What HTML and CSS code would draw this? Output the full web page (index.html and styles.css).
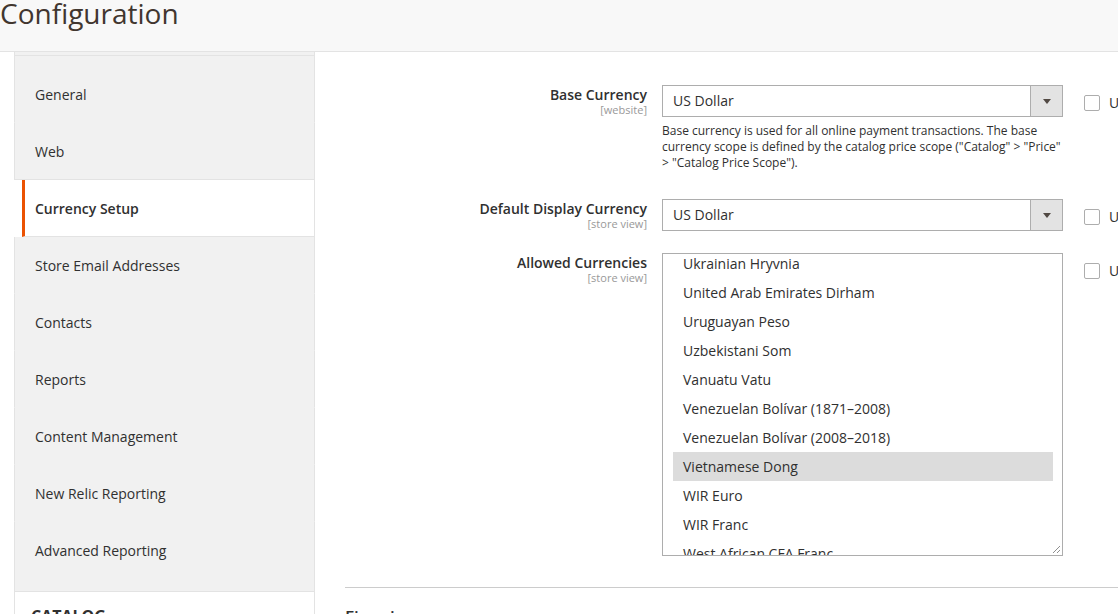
FILE: index.html
```html
<!DOCTYPE html>
<html lang="en">
<head>
<meta charset="utf-8">
<title>Configuration</title>
<link rel="stylesheet" href="styles.css">
</head>
<body>
<header class="page-header">
  <h1 class="page-title">Configuration</h1>
</header>
<div class="layout">
  <aside class="nav">
    <div class="nav-strip"></div>
    <ul class="nav-list">
      <li class="nav-item first">General</li>
      <li class="nav-item before-active">Web</li>
      <li class="nav-item active">Currency Setup</li>
      <li class="nav-item">Store Email Addresses</li>
      <li class="nav-item">Contacts</li>
      <li class="nav-item">Reports</li>
      <li class="nav-item">Content Management</li>
      <li class="nav-item">New Relic Reporting</li>
      <li class="nav-item last">Advanced Reporting</li>
    </ul>
    <div class="nav-title">Catalog</div>
  </aside>
  <main class="main">
    <div class="fieldset">
      <div class="field">
        <div class="field-label">
          <span class="label-text">Base Currency</span>
          <span class="scope">[website]</span>
        </div>
        <div class="field-control">
          <div class="select">
            <span class="select-value">US Dollar</span>
            <span class="select-arrow"><span class="triangle"></span></span>
          </div>
          <p class="note">Base currency is used for all online payment transactions. The base<br>currency scope is defined by the catalog price scope ("Catalog" &gt; "Price"<br>&gt; "Catalog Price Scope").</p>
        </div>
        <div class="field-use"><span class="checkbox"></span><span class="use-text">Use system value</span></div>
      </div>
      <div class="field">
        <div class="field-label">
          <span class="label-text">Default Display Currency</span>
          <span class="scope">[store view]</span>
        </div>
        <div class="field-control">
          <div class="select">
            <span class="select-value">US Dollar</span>
            <span class="select-arrow"><span class="triangle"></span></span>
          </div>
        </div>
        <div class="field-use"><span class="checkbox"></span><span class="use-text">Use system value</span></div>
      </div>
      <div class="field">
        <div class="field-label">
          <span class="label-text">Allowed Currencies</span>
          <span class="scope">[store view]</span>
        </div>
        <div class="field-control">
          <div class="multiselect">
            <ul class="options">
              <li class="option">Ukrainian Hryvnia</li>
              <li class="option">United Arab Emirates Dirham</li>
              <li class="option">Uruguayan Peso</li>
              <li class="option">Uzbekistani Som</li>
              <li class="option">Vanuatu Vatu</li>
              <li class="option">Venezuelan Bolívar (1871–2008)</li>
              <li class="option">Venezuelan Bolívar (2008–2018)</li>
              <li class="option selected">Vietnamese Dong</li>
              <li class="option">WIR Euro</li>
              <li class="option">WIR Franc</li>
              <li class="option">West African CFA Franc</li>
            </ul>
            <svg class="resize" width="9" height="9" viewBox="0 0 9 9"><path d="M1 8 L8 1 M5 8 L8 5" stroke="#8f8f8f" stroke-width="1" fill="none"/></svg>
          </div>
        </div>
        <div class="field-use"><span class="checkbox"></span><span class="use-text">Use system value</span></div>
      </div>
    </div>
    <section class="section">
      <h2 class="section-title">Fixer.io</h2>
    </section>
  </main>
</div>
</body>
</html>
```
FILE: styles.css
```css
html, body {
  margin: 0;
  padding: 0;
  overflow: hidden;
}
body {
  width: 1118px;
  height: 614px;
  font-family: "Open Sans", "Noto Sans", sans-serif;
  color: #303030;
  background: #fff;
}
.page-header {
  height: 51px;
  background: #f8f8f8;
  border-bottom: 1px solid #e3e3e3;
  overflow: hidden;
}
.page-title {
  margin: 0;
  font-size: 28px;
  line-height: 26px;
  font-weight: 400;
  color: #41362f;
}
.layout {
  display: flex;
}
.nav {
  width: 301px;
  margin-left: 14px;
  flex-shrink: 0;
}
.nav-strip {
  height: 3px;
  background: #f1f1f1;
  border: 1px solid #e3e3e3;
  border-top: 0;
}
.nav-list {
  list-style: none;
  margin: 0;
  padding: 0;
}
.nav-item {
  height: 56px;
  display: flex;
  align-items: center;
  padding-left: 20px;
  background: #f1f1f1;
  border: 1px solid #e3e3e3;
  border-top: 0;
  border-bottom-color: #f1f1f1;
  font-size: 14px;
}
.nav-item.first {
  padding-top: 10px;
}
.nav-item.last {
  padding-bottom: 13px;
  border-bottom-color: #e3e3e3;
}
.nav-item.before-active {
  border-bottom-color: #e3e3e3;
}
.nav-item.active {
  background: #fff;
  margin-left: 8px;
  border-left: 3px solid #eb5202;
  border-bottom-color: #e3e3e3;
  padding-left: 10px;
  font-weight: 600;
}
.nav-title {
  background: #fff;
  border: 1px solid #e3e3e3;
  border-top: 0;
  padding: 14px 0 20px 16px;
  font-size: 16px;
  line-height: 20px;
  font-weight: 700;
  text-transform: uppercase;
}
.main {
  flex: 1;
  min-width: 0;
  margin-left: 30px;
  overflow: hidden;
}
.fieldset {
  padding-top: 33px;
  padding-bottom: 31px;
  display: flex;
  flex-direction: column;
  gap: 22px;
}
.field {
  display: flex;
  align-items: flex-start;
}
.field-label {
  width: 302px;
  flex-shrink: 0;
  text-align: right;
  padding-top: 1px;
}
.label-text {
  display: block;
  font-size: 14px;
  font-weight: 600;
  line-height: 18px;
}
.scope {
  display: block;
  font-size: 11px;
  line-height: 12px;
  color: #999;
}
.field-control {
  width: 401px;
  flex-shrink: 0;
  margin-left: 15px;
}
.select {
  height: 32px;
  box-sizing: border-box;
  border: 1px solid #adadad;
  display: flex;
  align-items: stretch;
  background: #fff;
}
.select-value {
  flex: 1;
  padding-left: 10px;
  font-size: 14px;
  line-height: 30px;
}
.select-arrow {
  width: 32px;
  box-sizing: border-box;
  border-left: 1px solid #adadad;
  background: #e3e3e3;
  display: flex;
  align-items: center;
  justify-content: center;
}
.triangle {
  width: 0;
  height: 0;
  border-left: 4px solid transparent;
  border-right: 4px solid transparent;
  border-top: 5px solid #514943;
}
.note {
  margin: 6px 0 0;
  padding-bottom: 6px;
  width: 410px;
  font-size: 12px;
  line-height: 16px;
  white-space: nowrap;
}
.multiselect {
  position: relative;
  height: 303px;
  box-sizing: border-box;
  border: 1px solid #adadad;
  overflow: hidden;
  padding: 0 9px 0 10px;
}
.options {
  list-style: none;
  margin: -5px 0 0;
  padding: 0;
}
.option {
  height: 29px;
  line-height: 29px;
  padding-left: 10px;
  font-size: 14px;
  white-space: nowrap;
}
.option.selected {
  background: #dcdcdc;
}
.resize {
  position: absolute;
  right: 1px;
  bottom: 1px;
}
.field-use {
  margin-left: 21px;
  padding-top: 10px;
  display: flex;
  align-items: center;
  white-space: nowrap;
  flex-shrink: 0;
}
.checkbox {
  width: 16px;
  height: 16px;
  box-sizing: border-box;
  border: 1px solid #adadad;
  border-radius: 2px;
  background: #fff;
}
.use-text {
  margin-left: 9px;
  font-size: 14px;
  line-height: 16px;
}
.section {
  border-top: 1px solid #ccc;
  padding-top: 18px;
}
.section-title {
  margin: 0;
  font-size: 17px;
  line-height: 22px;
  font-weight: 600;
}
```
